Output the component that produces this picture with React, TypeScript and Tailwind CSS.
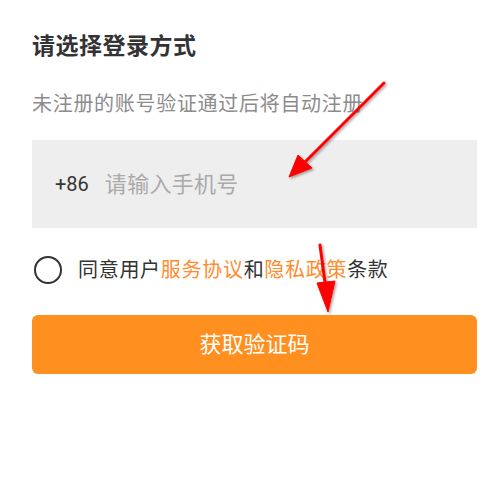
import React from 'react';

const FONT = { fontFamily: 'Roboto, "Noto Sans CJK SC", sans-serif' };

const Arrows: React.FC = () => (
  <svg className="absolute inset-0 pointer-events-none" width="495" height="486" viewBox="0 0 495 486">
    <defs>
      <filter id="sh" x="-20%" y="-20%" width="140%" height="140%">
        <feDropShadow dx="1.5" dy="1.5" stdDeviation="1.2" floodColor="#000" floodOpacity="0.35" />
      </filter>
    </defs>
    <g filter="url(#sh)" fill="#ff0000" stroke="#ff0000">
      <line x1="384" y1="83" x2="302" y2="165" strokeWidth="3" strokeLinecap="round" />
      <polygon points="289,177 298,155 312,168" strokeWidth="1" strokeLinejoin="round" />
      <line x1="320" y1="245" x2="326" y2="290" strokeWidth="3" strokeLinecap="round" />
      <polygon points="328,312 317,283 335,281" strokeWidth="1" strokeLinejoin="round" />
    </g>
  </svg>
);

const App: React.FC = () => {
  return (
    <div className="relative w-[495px] h-[486px] bg-white overflow-hidden" style={FONT}>
      <div className="pl-[32px] pr-[18px] pt-[32px]">
        <h1 className="text-[23px] leading-[30px] font-bold text-[#333333] tracking-[0.5px]">请选择登录方式</h1>
        <p className="mt-[27px] text-[20px] leading-[30px] text-[#8c8c8c] tracking-[0.7px]">未注册的账号验证通过后将自动注册</p>

        <div className="mt-[21px] h-[88px] bg-[#eeeeee] flex items-center pl-[23px]">
          <span className="text-[20px] text-[#333333]">+86</span>
          <span className="ml-[16px] text-[22px] text-[#aaaaaa] tracking-[0.3px]">请输入手机号</span>
        </div>

        <div className="mt-[27px] h-[30px] flex items-center">
          <div className="ml-[2px] w-[28px] h-[28px] rounded-full border-2 border-[#333333]" />
          <p className="ml-[16px] text-[20px] text-[#333333] tracking-[0.7px]">
            同意用户<span className="text-[#ff8c2e]">服务协议</span>和<span className="text-[#ff8c2e]">隐私政策</span>条款
          </p>
        </div>

        <button className="mt-[30px] w-full h-[59px] rounded-[6px] bg-[#ff8f1f] text-white text-[22px] flex items-center justify-center">
          获取验证码
        </button>
      </div>
      <Arrows />
    </div>
  );
};

export default App;
